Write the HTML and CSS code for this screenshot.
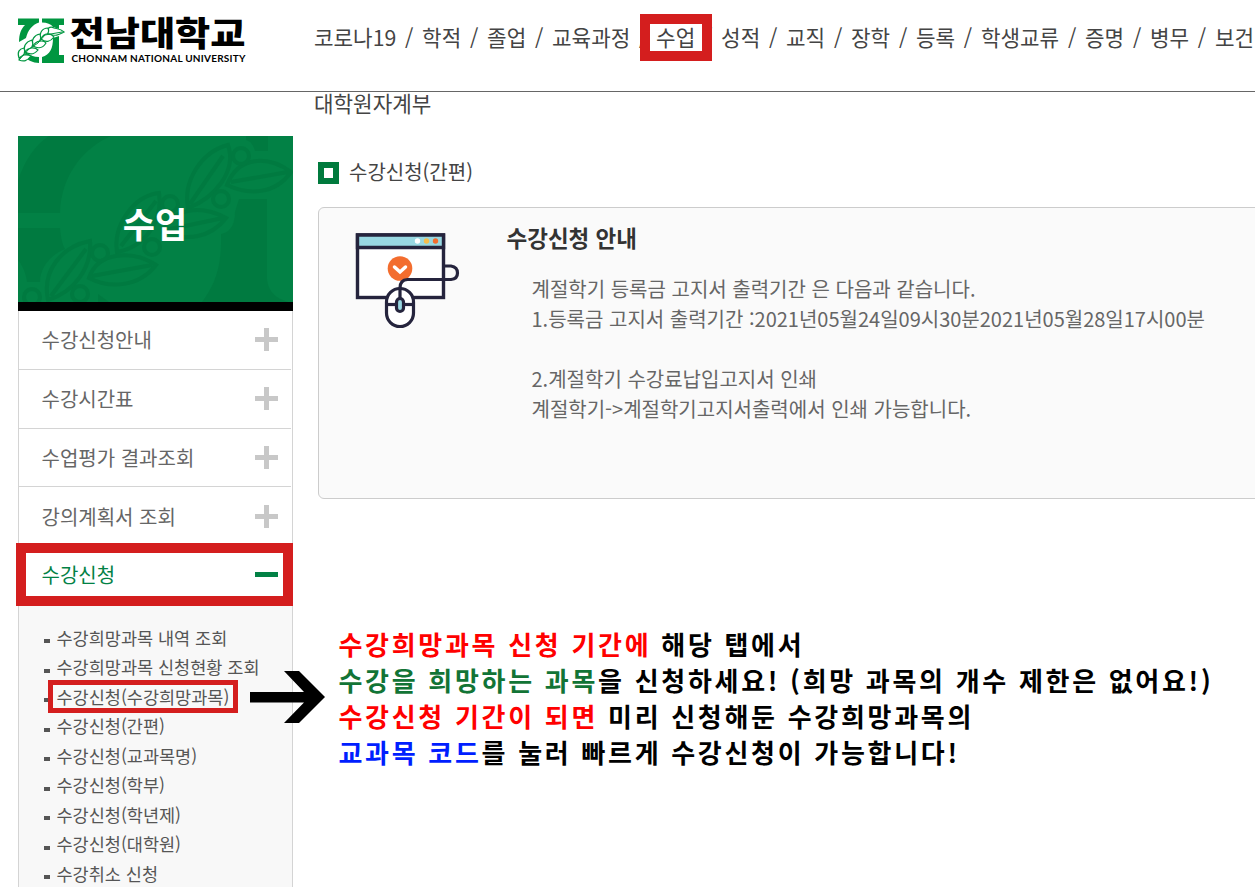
FILE: index.html
```html
<!DOCTYPE html>
<html lang="ko">
<head>
<meta charset="utf-8">
<title>전남대학교</title>
<link rel="stylesheet" href="styles.css">
</head>
<body>
<div class="page">
  <header class="header">
    <svg class="logo" width="232" height="54" viewBox="0 0 232 54">
      <g fill="#009640">
        <path d="M0 4.500H21V8.500C14 11 10 16 8 24L1 28C1 20 3 15 7 11H0Z"/>
        <path d="M24 4.500H46V11H41V15L35 13C33 10 29 8.500 24 8.500Z"/>
        <path d="M35 24L41 22V41H46V49H24V43C32 41 35 34 35 24Z"/>
        <path d="M8 38C11 41 16 43 21 43V49C15 49 9 46 6 42Z"/>
      </g>
      <g fill="#fff" stroke="#009640" stroke-width="1.200">
        <path d="M30 20C28 14 32 12 36 14C40 15 43 15 46 18C42 20 38 23 30 20Z"/>
        <path d="M23 25C21 19 24 14 30 14C32 18 29 22 23 25Z"/>
        <path d="M23 25C26 18 33 19 36 23C32 28 28 29 23 25Z"/>
        <path d="M15 32C13 26 16 21 22 20C24 25 22 29 15 32Z"/>
        <path d="M15 32C18 26 26 26 28 29C25 34 20 35 15 32Z"/>
        <path d="M7 38C5 32 8 28 14 26C16 31 14 36 7 38Z"/>
        <path d="M7 38C10 33 17 33 20 36C16 41 12 41 7 38Z"/>
        <path d="M1 44C-1 38 1 35 6 34C8 39 6 42 1 44Z"/>
        <path d="M1 46C3 40 9 40 13 42C9 47 6 48 1 46Z"/>
        <path d="M1 46L11 35L20 29L27 21L44 18" fill="none" stroke-width="1"/>
      </g>
      <text class="logo-ko" x="51.500" y="32" textLength="176" lengthAdjust="spacingAndGlyphs">전남대학교</text>
      <text class="logo-en" x="53.500" y="48" textLength="174" lengthAdjust="spacing">CHONNAM NATIONAL UNIVERSITY</text>
    </svg>
    <nav class="nav">
      <a>코로나19</a><i>/</i><a>학적</a><i>/</i><a>졸업</a><i>/</i><a>교육과정</a><i>/</i><a class="current">수업</a><i>/</i><a>성적</a><i>/</i><a>교직</a><i>/</i><a>장학</a><i>/</i><a>등록</a><i>/</i><a>학생교류</a><i>/</i><a>증명</a><i>/</i><a>병무</a><i>/</i><a>보건</a>
    </nav>
  </header>
  <div class="body">
    <aside class="side">
      <div class="banner">
        <svg class="banner-art" width="275" height="166" viewBox="0 0 275 166">
          <g fill="#007a40">
            <path d="M0 45C6 25 18 8 31 0H93C65 12 43 40 42 77H0Z"/>
            <path d="M0 92H42C43 102 44 108 47 113C32 119 22 132 22 146H9C8 135 2 126 0 124Z"/>
            <path d="M221 63H249V143C250 155 257 162 270 166H184C196 150 204 133 203 98C214 96 217 86 217 76Z"/>
            <path d="M228 0H250V15H237C235 8 232 5 228 4Z"/>
            <path d="M80 166V158L91 166Z"/>
          </g>
          <g fill="none" stroke="#007a40" stroke-width="4">
            <path d="M170 72C165 45 183 16 210 9C219 35 197 62 170 72ZM172 68L205 20"/>
            <path d="M209 49C220 20 250 19 273 36C257 59 230 59 209 49ZM213 46L270 36"/>
            <circle cx="223" cy="20" r="8"/><circle cx="203" cy="63" r="8"/>
            <path d="M99 116C95 90 115 60 141 57C145 85 127 111 99 116ZM103 110L138 65"/>
            <path d="M145 96C154 71 184 69 208 82C192 103 167 105 145 96ZM148 94L205 82"/>
            <circle cx="152" cy="68" r="8"/><circle cx="134" cy="111" r="8"/>
            <path d="M30 164C24 136 42 111 72 105C74 132 56 156 30 164ZM33 160L68 113"/>
            <path d="M71 142C80 115 115 114 138 129C121 151 92 153 71 142ZM74 140L134 129"/>
            <circle cx="82" cy="117" r="8"/><circle cx="62" cy="158" r="8"/><circle cx="14" cy="161" r="8"/>
          </g>
        </svg>
        <h1 class="banner-title">수업</h1>
      </div>
      <ul class="menu">
        <li class="menu-item">수강신청안내<span class="plus"></span></li>
        <li class="menu-item">수강시간표<span class="plus"></span></li>
        <li class="menu-item">수업평가 결과조회<span class="plus"></span></li>
        <li class="menu-item">강의계획서 조회<span class="plus"></span></li>
        <li class="menu-item open">수강신청<span class="minus"></span></li>
      </ul>
      <ul class="submenu">
        <li>수강희망과목 내역 조회</li>
        <li>수강희망과목 신청현황 조회</li>
        <li class="picked">수강신청(수강희망과목)</li>
        <li>수강신청(간편)</li>
        <li>수강신청(교과목명)</li>
        <li>수강신청(학부)</li>
        <li>수강신청(학년제)</li>
        <li>수강신청(대학원)</li>
        <li>수강취소 신청</li>
      </ul>
    </aside>
    <main class="main">
      <div class="nav-second">대학원자계부</div>
      <h2 class="title"><span class="title-mark"></span>수강신청(간편)</h2>
      <section class="panel">
        <svg class="panel-icon" width="106" height="98" viewBox="0 0 106 98">
          <g fill="#fff" stroke="#25243d" stroke-width="3.400">
            <rect x="2.500" y="4" width="86" height="62.500"/>
            <path d="M2.500 4H88.500V16.500H2.500Z" fill="#98d8e2"/>
          </g>
          <circle cx="62.500" cy="10" r="2.700" fill="#fff"/>
          <circle cx="71.500" cy="10" r="2.700" fill="#f6bd4c"/>
          <circle cx="80.500" cy="10" r="2.700" fill="#f36d2e"/>
          <circle cx="45" cy="37.500" r="12.300" fill="#f36d2e"/>
          <path d="M39.500 36L45 41L50.500 36" fill="none" stroke="#fff" stroke-width="3.500" stroke-linecap="round"/>
          <g fill="none" stroke="#25243d" stroke-width="3.200">
            <rect x="31.500" y="57.500" width="27" height="38" rx="13.500" fill="#fff"/>
            <path d="M31.500 73.500H58.500"/>
            <path d="M45 67V57Q45 49 52.500 48.500H96Q102.500 48 102.500 42T96 35H88.500"/>
            <rect x="41.500" y="67.500" width="7" height="13" rx="3.500" fill="#98d8e2"/>
          </g>
        </svg>
        <div class="panel-text">
          <h3>수강신청 안내</h3>
          <p>계절학기 등록금 고지서 출력기간 은 다음과 같습니다.<br>1.등록금 고지서 출력기간 :2021년05월24일09시30분2021년05월28일17시00분<br><br>2.계절학기 수강료납입고지서 인쇄<br>계절학기-&gt;계절학기고지서출력에서 인쇄 가능합니다.</p>
        </div>
      </section>
      <div class="guide">
        <p><span class="red">수강희망과목 신청 기간에</span> 해당 탭에서</p>
        <p><span class="green">수강을 희망하는 과목</span>을 신청하세요! (희망 과목의 개수 제한은 없어요!)</p>
        <p><span class="red">수강신청 기간이 되면</span> 미리 신청해둔 수강희망과목의</p>
        <p><span class="blue">교과목 코드</span>를 눌러 빠르게 수강신청이 가능합니다!</p>
      </div>
    </main>
  </div>
  <svg class="arrow" width="76" height="54" viewBox="0 0 76 54"><path d="M0 22H54L34 1H49L75 27L49 53H34L54 32.500H0Z"/></svg>
</div>
</body>
</html>
```
FILE: styles.css
```css
*, *::before, *::after { box-sizing: border-box; margin: 0; padding: 0; }
body {
  background: #fff;
  color: #444;
  font-family: "Noto Sans CJK KR", sans-serif;
  overflow: hidden;
}
ul { list-style: none; }
.page { position: relative; width: 1255px; height: 887px; overflow: hidden; }

.header {
  display: flex;
  height: 92px;
  padding: 14px 0 0 18px;
  border-bottom: 1px solid #666;
}
.logo { flex: none; overflow: visible; }
.logo-ko { font-size: 34px; font-weight: 900; fill: #000; }
.logo-en { font-family: Lato, sans-serif; font-size: 10px; font-weight: 700; fill: #000; }
.nav {
  display: flex;
  flex: none;
  gap: 8.75px;
  margin-left: 64px;
  font-size: 21.25px;
  line-height: 46px;
  white-space: nowrap;
}
.nav i { font-style: normal; }
.current { position: relative; }
.current::after {
  content: "";
  position: absolute;
  left: -16px;
  top: 0;
  width: 72px;
  height: 47px;
  border: 10px solid #d41e1e;
}

.body { display: flex; }
.side { flex: none; width: 275px; margin: 44px 0 0 18px; }
.banner {
  display: grid;
  height: 175px;
  background: #028145;
  border-bottom: 9px solid #000;
}
.banner-art, .banner-title { grid-area: 1 / 1; }
.banner-title {
  z-index: 1;
  color: #fff;
  font-size: 35px;
  font-weight: 700;
  line-height: 174px;
  margin-right: 1px;
  text-align: center;
}
.menu { border: solid #d4d4d4; border-width: 0 1px; }
.menu-item {
  position: relative;
  display: flex;
  align-items: center;
  justify-content: space-between;
  height: 58.75px;
  margin-right: 1px;
  padding: 0 13px 0 22.5px;
  border-bottom: 1px solid #d4d4d4;
  color: #666;
  font-size: 20px;
}
.open { color: #028145; }
.open::after {
  content: "";
  position: absolute;
  left: -3px;
  top: -3px;
  width: 277px;
  height: 63px;
  border: 10px solid #d41e1e;
}
.plus {
  width: 23px;
  height: 23px;
  background:
    linear-gradient(#c8c8c8, #c8c8c8) center / 23px 5px no-repeat,
    linear-gradient(#c8c8c8, #c8c8c8) center / 5px 23px no-repeat;
}
.minus { width: 23px; height: 5px; background: #028145; }
.submenu {
  height: 290px;
  padding: 17.5px 0 0 25px;
  background: #f8f8f8;
  border: solid #d4d4d4;
  border-width: 0 1px;
}
.submenu li {
  position: relative;
  display: flex;
  align-items: center;
  gap: 6.5px;
  height: 29.5px;
  color: #555;
  font-size: 17.5px;
  white-space: nowrap;
}
.submenu li::before {
  content: "";
  width: 6px;
  height: 4px;
  margin-top: 8px;
  background: #555;
}
.submenu .picked::after {
  content: "";
  position: absolute;
  left: 4px;
  top: -1px;
  width: 190px;
  height: 33px;
  border: 5px solid #d41e1e;
}

.main { flex: 1; min-width: 0; padding-left: 25px; }
.nav-second { height: 24px; margin-left: -4px; font-size: 21.25px; line-height: 22px; }
.title {
  display: flex;
  align-items: center;
  gap: 10px;
  height: 30px;
  margin-top: 40px;
  font-size: 20px;
  font-weight: 400;
}
.title-mark { width: 21px; height: 22px; margin-top: 3px; border: 6px solid #007a3d; }
.panel {
  display: flex;
  width: 960px;
  height: 292px;
  margin-top: 21px;
  padding: 14px 0 0 36px;
  background: #fafafa;
  border: 1px solid #ccc;
  border-radius: 6px;
}
.panel-icon { flex: none; margin-top: 9px; }
.panel-text { padding-left: 45.5px; white-space: nowrap; }
.panel-text h3 { color: #333; font-size: 22.5px; font-weight: 700; line-height: 30px; }
.panel-text p { margin: 22px 0 0 25px; color: #666; font-size: 20px; line-height: 30px; }

.guide {
  margin: 127px 0 0 20.5px;
  color: #000;
  font-size: 26px;
  font-weight: 700;
  letter-spacing: 2.7px;
  line-height: 36px;
  white-space: nowrap;
}
.red { color: #f00; }
.green { color: #127436; }
.blue { color: #001eff; }
.arrow { position: absolute; left: 250px; top: 670px; }
```
